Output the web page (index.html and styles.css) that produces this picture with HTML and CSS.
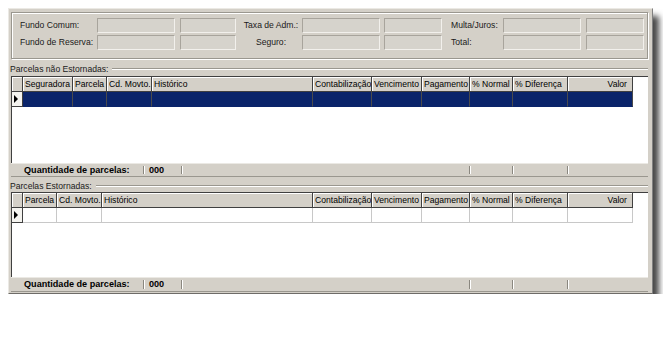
FILE: index.html
```html
<!DOCTYPE html>
<html lang="pt">
<head>
    <meta charset="UTF-8">
    <title>Parcelas</title>
    <link rel="stylesheet" href="styles.css">
</head>
<body>
    <div class="window">
        <div class="groupbox">
            <div class="totals">
                <span class="lbl">Fundo Comum:</span>
                <span class="field big"></span>
                <span class="field sm1"></span>
                <span class="lbl center">Taxa de Adm.:</span>
                <span class="field big"></span>
                <span class="field sm"></span>
                <span class="lbl">Multa/Juros:</span>
                <span class="field big"></span>
                <span class="field sm"></span>

                <span class="lbl">Fundo de Reserva:</span>
                <span class="field big"></span>
                <span class="field sm1"></span>
                <span class="lbl center">Seguro:</span>
                <span class="field big"></span>
                <span class="field sm"></span>
                <span class="lbl">Total:</span>
                <span class="field big"></span>
                <span class="field sm"></span>
            </div>
        </div>

        <div class="section-label first">
            <span>Parcelas não Estornadas:</span>
            <div class="etch"></div>
        </div>
        <div class="grid-frame grid-one">
            <table class="grid">
                <colgroup>
                    <col style="width:11px">
                    <col style="width:50px">
                    <col style="width:34px">
                    <col style="width:45px">
                    <col style="width:161px">
                    <col style="width:59px">
                    <col style="width:50px">
                    <col style="width:48px">
                    <col style="width:43px">
                    <col style="width:55px">
                    <col style="width:65px">
                </colgroup>
                <thead>
                    <tr>
                        <th></th>
                        <th>Seguradora</th>
                        <th>Parcela</th>
                        <th>Cd. Movto.</th>
                        <th>Histórico</th>
                        <th>Contabilização</th>
                        <th>Vencimento</th>
                        <th>Pagamento</th>
                        <th>% Normal</th>
                        <th>% Diferença</th>
                        <th class="num">Valor</th>
                    </tr>
                </thead>
                <tbody>
                    <tr class="selected">
                        <td class="indicator"><span class="arrow"></span></td>
                        <td></td><td></td><td></td><td></td><td></td>
                        <td></td><td></td><td></td><td></td><td></td>
                    </tr>
                </tbody>
            </table>
        </div>
        <div class="footer">
            <div class="foot-cell label">Quantidade de parcelas:</div>
            <div class="foot-cell count">000</div>
            <div class="foot-cell wide"></div>
            <div class="foot-cell w43"></div>
            <div class="foot-cell w55"></div>
            <div class="foot-cell rest"></div>
        </div>

        <div class="section-label second">
            <span>Parcelas Estornadas:</span>
            <div class="etch"></div>
        </div>
        <div class="grid-frame grid-two">
            <table class="grid">
                <colgroup>
                    <col style="width:11px">
                    <col style="width:34px">
                    <col style="width:45px">
                    <col style="width:211px">
                    <col style="width:59px">
                    <col style="width:50px">
                    <col style="width:48px">
                    <col style="width:43px">
                    <col style="width:55px">
                    <col style="width:65px">
                </colgroup>
                <thead>
                    <tr>
                        <th></th>
                        <th>Parcela</th>
                        <th>Cd. Movto.</th>
                        <th>Histórico</th>
                        <th>Contabilização</th>
                        <th>Vencimento</th>
                        <th>Pagamento</th>
                        <th>% Normal</th>
                        <th>% Diferença</th>
                        <th class="num">Valor</th>
                    </tr>
                </thead>
                <tbody>
                    <tr>
                        <td class="indicator"><span class="arrow"></span></td>
                        <td></td><td></td><td></td><td></td>
                        <td></td><td></td><td></td><td></td><td></td>
                    </tr>
                </tbody>
            </table>
        </div>
        <div class="footer last">
            <div class="foot-cell label">Quantidade de parcelas:</div>
            <div class="foot-cell count">000</div>
            <div class="foot-cell wide"></div>
            <div class="foot-cell w43"></div>
            <div class="foot-cell w55"></div>
            <div class="foot-cell rest"></div>
        </div>
    </div>
</body>
</html>
```

FILE: styles.css
```css
body {
    margin: 8px;
    background: #fff;
    font-family: 'Liberation Sans', Arial, sans-serif;
    font-size: 8.6px;
    color: #000;
}

.window {
    width: 645px;
    height: 286px;
    box-sizing: border-box;
    background: #d4d0c8;
    border: 1px solid;
    border-color: #ebe9e4 #808080 #6e6c68 #ebe9e4;
    padding: 3px 4px 0 2px;
    box-shadow: 6px 8px 6px rgba(0, 0, 0, 0.72);
}

/* top totals box */
.groupbox {
    height: 47px;
    box-sizing: border-box;
    border: 1px solid #9a978f;
    box-shadow: inset 1px 1px 0 #fff, 1px 1px 0 #fff;
    padding: 5px 0 0 8px;
}

.totals {
    display: grid;
    grid-template-columns: 77px 83px 63px 59px 82px 67px 52px 83px 58px;
    grid-auto-rows: 15px;
    row-gap: 2px;
}

.lbl {
    line-height: 15px;
    white-space: nowrap;
    color: #1a1a1a;
}

.lbl.center {
    text-align: center;
    padding-right: 3px;
}

.field {
    height: 15px;
    box-sizing: border-box;
    border: 1px solid;
    border-color: #a8a49c #f2f0ec #f2f0ec #a8a49c;
    background: #d6d3cc;
}

.field.big { width: 78px; }
.field.sm1 { width: 56px; }
.field.sm { width: 58px; }

/* section captions */
.section-label {
    display: flex;
    align-items: center;
    height: 14px;
    margin-left: -1px;
    color: #1a1a1a;
    white-space: nowrap;
}

.section-label.first { margin-top: 3px; }
.section-label.second { margin-top: 2px; height: 13px; }

.etch {
    flex: 1;
    margin-left: 4px;
    border-top: 1px solid #9a978f;
    border-bottom: 1px solid #fff;
}

/* data grids */
.grid-frame {
    background: #fff;
    border-top: 1px solid #404040;
    border-left: 1px solid #404040;
    overflow: hidden;
}

.grid-one { height: 86px; }
.grid-two { height: 84px; }

.grid {
    table-layout: fixed;
    width: 621px;
    border-collapse: separate;
    border-spacing: 0;
}

.grid th {
    height: 14px;
    padding: 0 2px;
    background: #d4d0c8;
    border-right: 1px solid #404040;
    border-bottom: 1px solid #404040;
    box-shadow: inset 1px 1px 0 #fff;
    font-weight: normal;
    text-align: left;
    white-space: nowrap;
    overflow: hidden;
}

.grid th.num {
    text-align: right;
    padding-right: 5px;
}

.grid td {
    height: 14px;
    padding: 0;
    border-right: 1px solid #c8c8c8;
    border-bottom: 1px solid #c8c8c8;
}

.grid .selected td {
    background: #0a246a;
    border-right-color: #4a4a4a;
    border-bottom-color: #0a246a;
}

.grid td.indicator,
.grid .selected td.indicator {
    background: #f4f3ef;
    border-right: 1px solid #404040;
    border-bottom: 1px solid #404040;
}

.arrow {
    display: block;
    width: 0;
    height: 0;
    margin-left: 2px;
    border-left: 4px solid #000;
    border-top: 4px solid transparent;
    border-bottom: 4px solid transparent;
}

/* footer bar */
.footer {
    display: flex;
    height: 14px;
    box-sizing: border-box;
    background: #d4d0c8;
    border-top: 1px solid #ebe9e4;
    border-bottom: 1px solid #9a978f;
    font-weight: bold;
    font-size: 9.1px;
}

.footer.last {
    height: 15px;
}

.foot-cell {
    margin: 2px 0;
    line-height: 9px;
    white-space: nowrap;
}

.foot-cell + .foot-cell {
    border-left: 1px solid #8a877f;
    box-shadow: inset 1px 0 0 #fff;
}

.foot-cell.label { width: 119px; padding-left: 13px; }
.foot-cell.count { width: 32px; padding-left: 5px; }
.foot-cell.wide { width: 287px; }
.foot-cell.w43 { width: 42px; }
.foot-cell.w55 { width: 54px; }
.foot-cell.rest { flex: 1; }
```
